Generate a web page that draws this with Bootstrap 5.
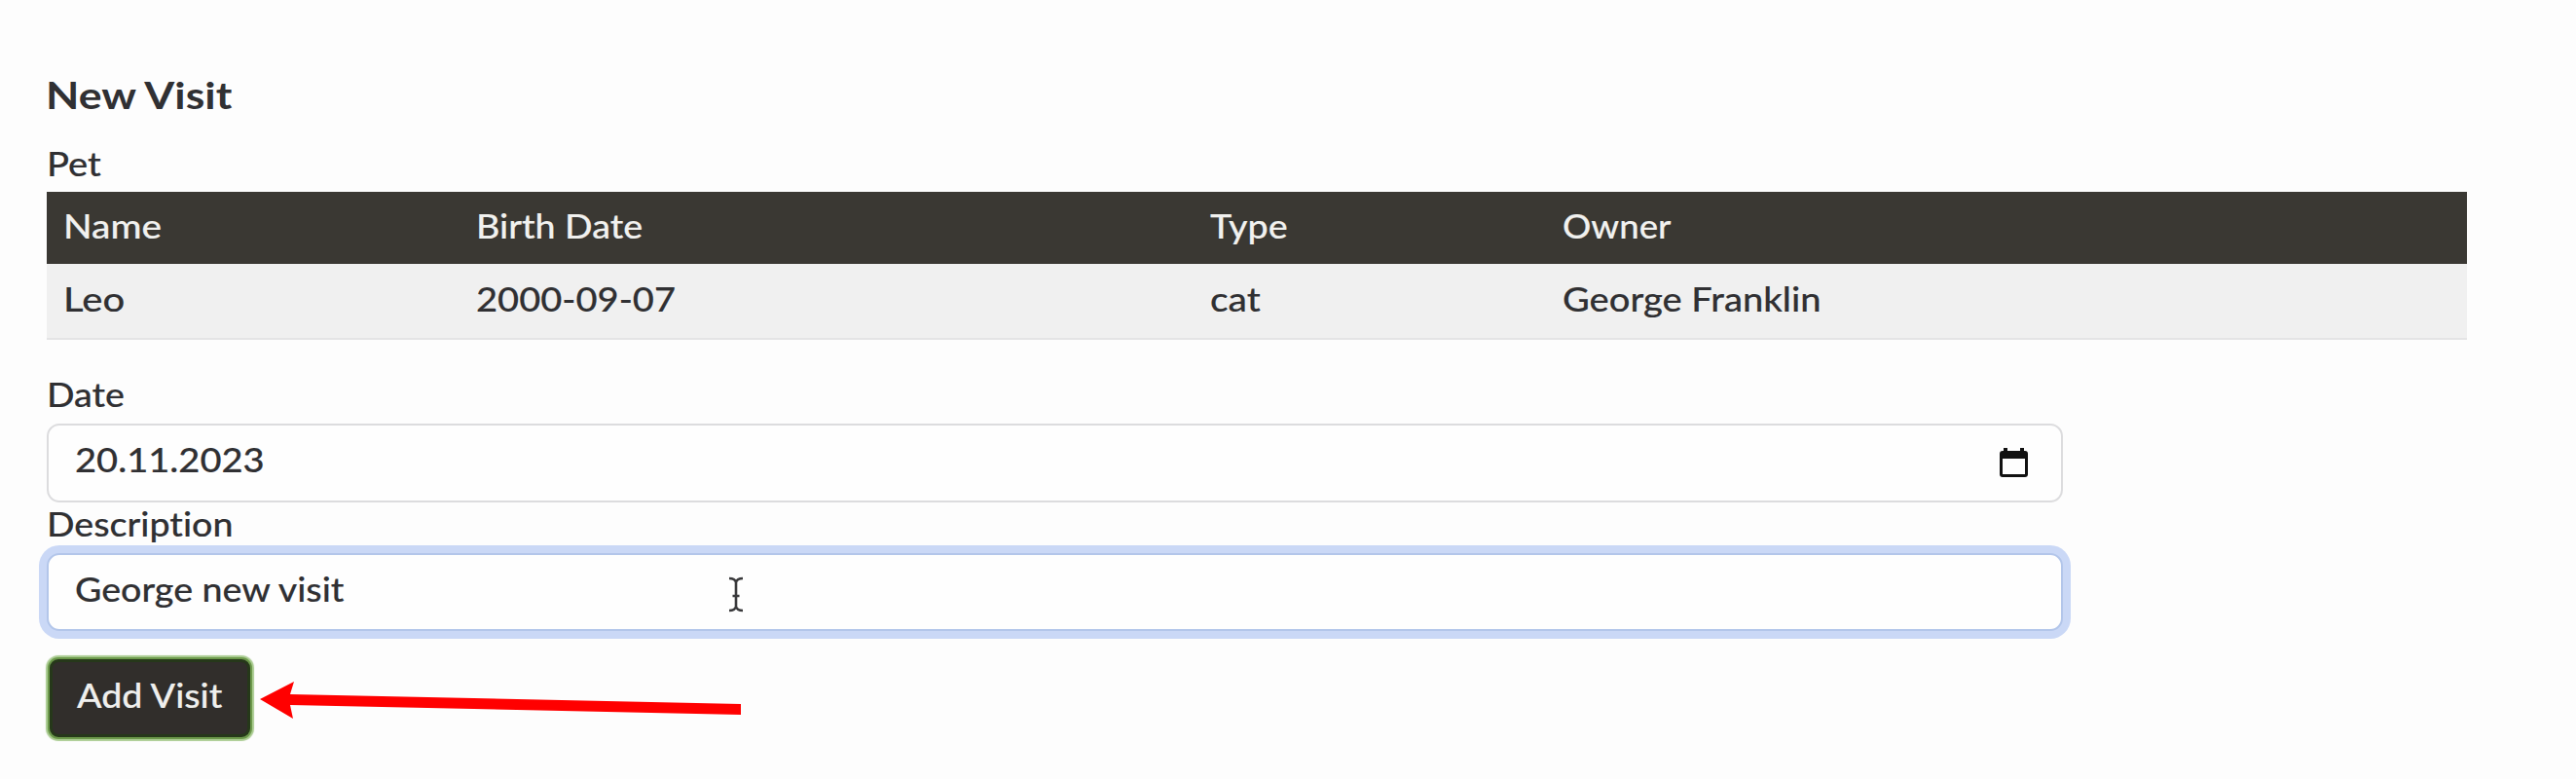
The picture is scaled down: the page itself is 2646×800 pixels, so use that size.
<!DOCTYPE html>
<html lang="en">
<head>
<meta charset="utf-8">
<meta name="viewport" content="width=device-width, initial-scale=1">
<title>New Visit</title>
<link href="https://cdn.jsdelivr.net/npm/bootstrap@5.3.0/dist/css/bootstrap.min.css" rel="stylesheet">
<style>
  body { background: #fdfdfd; color: #303033; font: 500 34px/40px Lato, "Noto Sans", sans-serif; font-variant-ligatures: none; overflow: hidden; }
  main { padding: 75px 0 0 48px; height: 800px; }
  /* widened lettering */
  .wd { display: inline-block; white-space: nowrap; transform-origin: 0 50%; transform: scaleX(var(--sx, 1.12)); -webkit-text-stroke: .15px currentColor; }
  h2 { font-size: 38px; line-height: 45px; font-weight: 700; margin: 0 0 28px -1px; --sx: 1.175; }
  h2 .wd { -webkit-text-stroke: 0; }
  .lbl { display: block; height: 40px; margin: 0 0 10px; }
  .lbl.pet { margin-bottom: 9px; }
  .pets { width: 2486px; table-layout: fixed; margin: 0 0 36px; border-collapse: separate; border-spacing: 0; --bs-table-striped-bg: #f0f0f0; --bs-table-striped-color: #303033; }
  .pets > thead > tr > th { height: 74px; padding: 0 0 5px 16px; line-height: 69px; background: #3a3833; color: #f1f1ef; font-weight: 500; border: 0; }
  .pets > tbody > tr > td { height: 78px; padding: 0 0 5px 16px; line-height: 71px; background: #f0f0f0; box-shadow: none; color: #303033; border: 0; border-bottom: 2px solid #e4e4e5; }
  .pets > * > tr > :first-child { padding-left: 17px !important; }
  .fields { width: 2071px; }
  .fld { height: 81px; margin-bottom: 2px; padding: 0 34px 0 27px; border: 2px solid #dcdcde; border-radius: 13px; background: #fefefe; color: #303033; font: inherit; line-height: 70px; }
  .fld.active { height: 80px; margin-bottom: 29px; border-color: #b3c6ea; box-shadow: 0 0 0 8px #cad8f6; }
  .fld svg { margin-top: 22px; }
  .go { display: flex; align-items: flex-start; width: 206px; height: 80px; margin: 0 0 0 3px; padding: 0 0 0 25px; border: 3px solid #26381a; border-radius: 9px; background: #312e2b; color: #efefed; font: inherit; line-height: 67px; box-shadow: 0 0 0 2px #6c994b, 0 0 1px 4px #a9cb90; }
  .go:hover { background: #312e2b; color: #efefed; }
  .s07 { --sx: 1.075; } .s10 { --sx: 1.105; } .s14 { --sx: 1.14; } .s18 { --sx: 1.175; }
  .ibeam { position: absolute; left: 747px; top: 591px; }
  .pointer { position: absolute; left: 265px; top: 698px; }
</style>
</head>
<body>
<main class="position-relative">
  <h2><span class="wd">New Visit</span></h2>
  <div class="lbl pet"><span class="wd">Pet</span></div>
  <table class="table table-striped pets">
    <colgroup><col style="width:425px"><col style="width:754px"><col style="width:362px"><col></colgroup>
    <thead><tr>
      <th><span class="wd s14">Name</span></th><th><span class="wd s10">Birth Date</span></th><th><span class="wd s10">Type</span></th><th><span class="wd s07">Owner</span></th>
    </tr></thead>
    <tbody><tr>
      <td><span class="wd s18">Leo</span></td><td><span class="wd">2000-09-07</span></td><td><span class="wd s14">cat</span></td><td><span class="wd">George Franklin</span></td>
    </tr></tbody>
  </table>
  <form class="fields">
    <div class="lbl"><span class="wd s10">Date</span></div>
    <div class="form-control fld d-flex justify-content-between align-items-start">
      <span class="wd">20.11.2023</span>
      <svg width="30" height="33" viewBox="0 0 30 33" aria-hidden="true"><path fill="#111" fill-rule="evenodd" d="M5 1h4v3h13V1h4v3h1q3 0 3 3v21q0 3-3 3H4q-3 0-3-3V7q0-3 3-3h1zM4 12v16h23V12z"/></svg>
    </div>
    <div class="lbl"><span class="wd s10">Description</span></div>
    <div class="form-control fld active"><span class="wd s10">George new visit</span></div>
    <button type="button" class="btn go"><span class="wd s10">Add Visit</span></button>
  </form>
  <svg class="ibeam" width="18" height="38" viewBox="0 0 18 38" fill="none" stroke="#39393b" stroke-width="2.6" aria-hidden="true"><path d="M2 3q6 0 7 4 1-4 7-4M9 7v25M2 36q6 0 7-4 1 4 7 4M5.500 21h7"/></svg>
  <svg class="pointer" width="498" height="42" viewBox="0 0 498 42" aria-hidden="true"><path fill="#f00" d="M2 20 37 2 33 15 496 25V36L33 26 36 40z"/></svg>
</main>
<script src="https://cdn.jsdelivr.net/npm/bootstrap@5.3.0/dist/js/bootstrap.bundle.min.js"></script>
</body>
</html>
